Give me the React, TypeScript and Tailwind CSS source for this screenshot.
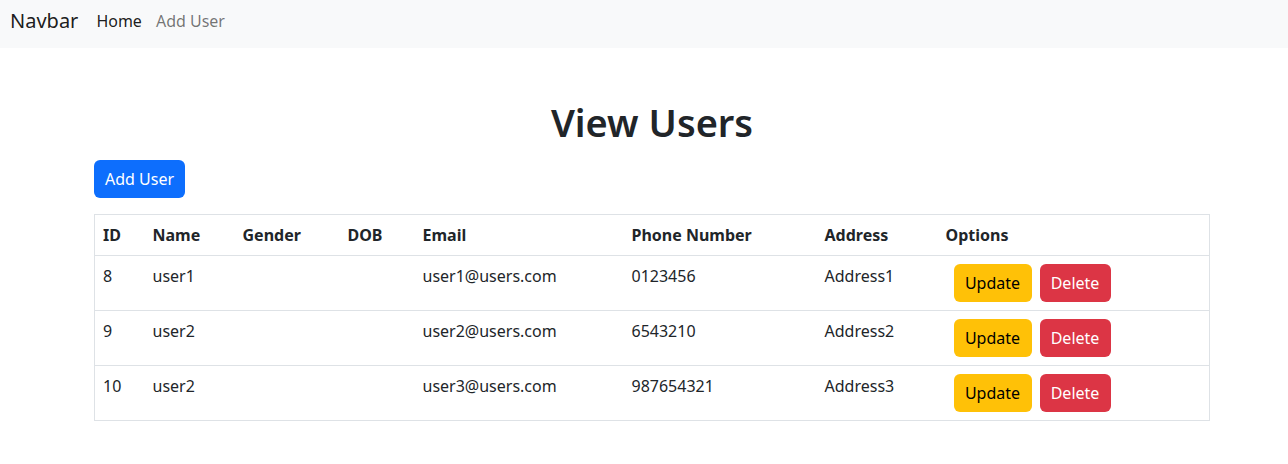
import React from 'react';

const USERS = [
  { id: 8, name: 'user1', gender: '', dob: '', email: 'user1@users.com', phone: '0123456', address: 'Address1' },
  { id: 9, name: 'user2', gender: '', dob: '', email: 'user2@users.com', phone: '6543210', address: 'Address2' },
  { id: 10, name: 'user2', gender: '', dob: '', email: 'user3@users.com', phone: '987654321', address: 'Address3' },
];

const COLS = [
  { label: 'ID', w: 'w-[50px]' },
  { label: 'Name', w: 'w-[90px]' },
  { label: 'Gender', w: 'w-[105px]' },
  { label: 'DOB', w: 'w-[75px]' },
  { label: 'Email', w: 'w-[209px]' },
  { label: 'Phone Number', w: 'w-[193px]' },
  { label: 'Address', w: 'w-[121px]' },
  { label: 'Options', w: '' },
];

export default function App() {
  return (
    <div className="min-h-[464px] bg-white text-[#212529] font-['Noto_Sans',sans-serif]">
      {/* Navbar */}
      <nav className="h-12 bg-[#f8f9fa] flex items-center px-[10px] pb-[7px]">
        <span className="text-xl text-black/90 mr-[18px]">Navbar</span>
        <a className="text-base text-black/90 mr-[14px]">Home</a>
        <a className="text-base text-black/55">Add User</a>
      </nav>

      <main className="ml-[94px] w-[1116px]">
        <h1 className="text-[38px] leading-[48px] font-semibold text-center mt-[50px] mb-[14px]">View Users</h1>

        <button className="h-[38px] w-[91px] bg-[#0d6efd] text-white text-base rounded-md">Add User</button>

        <table className="mt-4 w-full table-fixed border border-[#dee2e6] border-collapse text-base">
          <thead>
            <tr className="border-b border-[#dee2e6] h-[41px]">
              {COLS.map(c => (
                <th key={c.label} className={`${c.w} text-left font-bold px-2 align-middle`}>{c.label}</th>
              ))}
            </tr>
          </thead>
          <tbody>
            {USERS.map(u => (
              <tr key={u.id} className="border-b border-[#dee2e6] h-[55px]">
                <td className="px-2 pt-2 align-top">{u.id}</td>
                <td className="px-2 pt-2 align-top">{u.name}</td>
                <td className="px-2 pt-2 align-top">{u.gender}</td>
                <td className="px-2 pt-2 align-top">{u.dob}</td>
                <td className="px-2 pt-2 align-top">{u.email}</td>
                <td className="px-2 pt-2 align-top">{u.phone}</td>
                <td className="px-2 pt-2 align-top">{u.address}</td>
                <td className="px-2 pt-[8px] align-top">
                  <div className="flex gap-2 pl-2">
                    <button className="h-[38px] w-[78px] bg-[#ffc107] text-black rounded-md">Update</button>
                    <button className="h-[38px] w-[71px] bg-[#dc3545] text-white rounded-md">Delete</button>
                  </div>
                </td>
              </tr>
            ))}
          </tbody>
        </table>
      </main>
    </div>
  );
}
